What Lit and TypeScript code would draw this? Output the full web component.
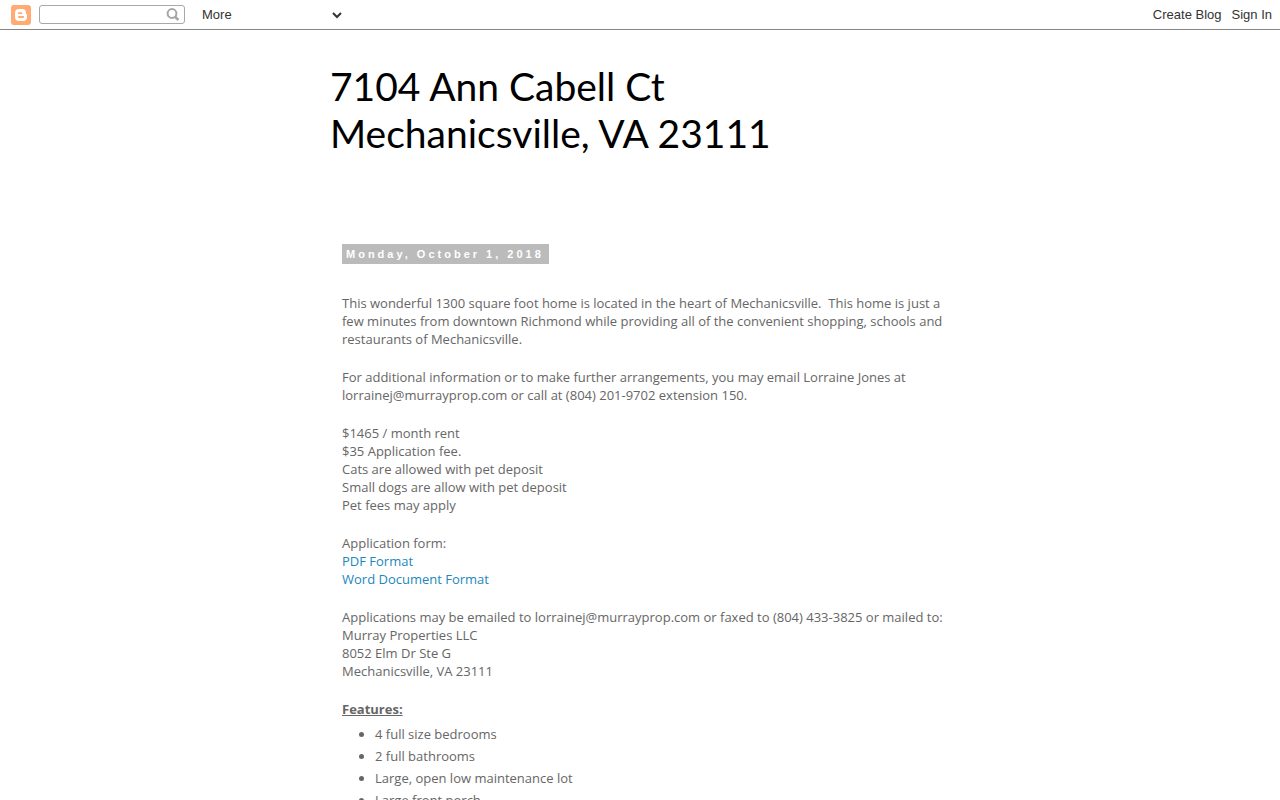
import { LitElement, html, css } from "lit";
import { customElement } from "lit/decorators.js";

@customElement("blog-navbar")
class BlogNavbar extends LitElement {
  static styles = css`
    :host {
      display: block;
      font-family: Arial, "Liberation Sans", sans-serif;
      font-size: 13px;
      color: #333;
    }
    .bar {
      display: flex;
      align-items: center;
      box-sizing: border-box;
      height: 30px;
      padding: 0 8px 0 11px;
      border-bottom: 1px solid #868686;
      background: #fff;
    }
    .logo {
      display: block;
      width: 20px;
      height: 20px;
    }
    .search {
      display: flex;
      align-items: center;
      box-sizing: border-box;
      width: 146px;
      height: 19px;
      margin: 0 13px 0 8px;
      border: 1px solid #a8a8a8;
      border-radius: 3px;
    }
    .query {
      flex: 1;
      min-width: 0;
      height: 15px;
      padding: 0 4px;
      border: 0;
      outline: 0;
      background: transparent;
      font: inherit;
      font-size: 12px;
    }
    .go {
      display: block;
      width: 14px;
      height: 14px;
      margin: 0 4px 0 0;
      padding: 0;
      border: 0;
      background: none;
    }
    .go svg {
      display: block;
    }
    .more {
      width: 147px;
      height: 20px;
      border: 0;
      padding: 0;
      background: #fff;
      font: inherit;
      color: inherit;
    }
    .account {
      display: flex;
      gap: 10px;
      margin-left: auto;
    }
    .account a {
      color: inherit;
      text-decoration: none;
    }
  `;

  render() {
    return html`
      <nav class="bar">
        <a href="#" aria-label="Blogger">
          <svg class="logo" viewBox="0 0 20 20">
            <rect width="20" height="20" rx="3" fill="#ffab73" />
            <path
              fill="#fff"
              fill-rule="evenodd"
              d="M8 4h3.200A3.800 3.800 0 0 1 15 7.800V8.300q0 .9.800.900Q16 9.200 16 10v2A4 4 0 0 1 12 16H8A4 4 0 0 1 4 12V8A4 4 0 0 1 8 4ZM7.900 7.300a.9.900 0 0 0 0 1.800h2.600a.9.900 0 0 0 0-1.800ZM7.900 11.100a.9.900 0 0 0 0 1.800h4.300a.9.900 0 0 0 0-1.800Z"
            />
          </svg>
        </a>
        <form class="search" @submit=${(e: Event) => e.preventDefault()}>
          <input class="query" type="text" aria-label="Search this blog" />
          <button class="go" type="submit" aria-label="Search">
            <svg width="14" height="14" viewBox="0 0 14 14" fill="none" stroke="#a6a6a6">
              <circle cx="6" cy="5.500" r="4.400" stroke-width="2" />
              <path d="M9.200 8.800l3.200 3.200" stroke-width="2.600" />
            </svg>
          </button>
        </form>
        <select class="more" aria-label="More">
          <option>More</option>
        </select>
        <div class="account">
          <a href="#">Create Blog</a>
          <a href="#">Sign In</a>
        </div>
      </nav>
    `;
  }
}

@customElement("app-root")
class AppRoot extends LitElement {
  static styles = css`
    :host {
      display: block;
      height: 100vh;
      overflow: hidden;
      background: #fff;
      color: #666;
      font-family: "Trebuchet MS", Trebuchet, "Open Sans", sans-serif;
      font-size: 13px;
      line-height: 18px;
    }
    .page {
      max-width: 620px;
      margin: 0 auto;
      padding-top: 33px;
    }
    .title {
      margin: 0;
      color: #000;
      font-family: "Trebuchet MS", Trebuchet, Lato, sans-serif;
      font-size: 39px;
      font-weight: 400;
      line-height: 47px;
    }
    .post {
      padding: 87px 0 0 12px;
    }
    .date {
      display: inline-block;
      margin: 0 0 30px;
      padding: 0 5px 0 4px;
      background: #bbb;
      color: #fff;
      font: bold 11px/20px Arial, "Liberation Sans", sans-serif;
      letter-spacing: 3px;
    }
    p {
      margin: 0 0 20px;
    }
    a {
      color: #2288bb;
      text-decoration: none;
    }
    .heading {
      margin: 0;
      font-size: 13px;
      text-decoration: underline;
    }
    ul {
      margin: 5px 0;
      padding-left: 33px;
    }
    li {
      padding: 2px 0;
    }
  `;

  render() {
    const features = [
      "4 full size bedrooms",
      "2 full bathrooms",
      "Large, open low maintenance lot",
      "Large front porch",
    ];
    return html`
      <blog-navbar></blog-navbar>
      <main class="page">
        <h1 class="title">7104 Ann Cabell Ct<br />Mechanicsville, VA 23111</h1>
        <article class="post">
          <h2 class="date">Monday, October 1, 2018</h2>
          <p>
            This wonderful 1300 square foot home is located in the heart of Mechanicsville.&nbsp; This
            home is just a few minutes from downtown Richmond while providing all of the convenient
            shopping, schools and restaurants of Mechanicsville.
          </p>
          <p>
            For additional information or to make further arrangements, you may email Lorraine Jones
            at lorrainej@murrayprop.com or call at (804) 201-9702 extension 150.
          </p>
          <p>
            $1465 / month rent<br />
            $35 Application fee.<br />
            Cats are allowed with pet deposit<br />
            Small dogs are allow with pet deposit<br />
            Pet fees may apply
          </p>
          <p>
            Application form:<br />
            <a href="#">PDF Format</a><br />
            <a href="#">Word Document Format</a>
          </p>
          <p>
            Applications may be emailed to lorrainej@murrayprop.com or faxed to (804) 433-3825 or
            mailed to:<br />
            Murray Properties LLC<br />
            8052 Elm Dr Ste G<br />
            Mechanicsville, VA 23111
          </p>
          <h3 class="heading">Features:</h3>
          <ul>
            ${features.map((f) => html`<li>${f}</li>`)}
          </ul>
        </article>
      </main>
    `;
  }
}
